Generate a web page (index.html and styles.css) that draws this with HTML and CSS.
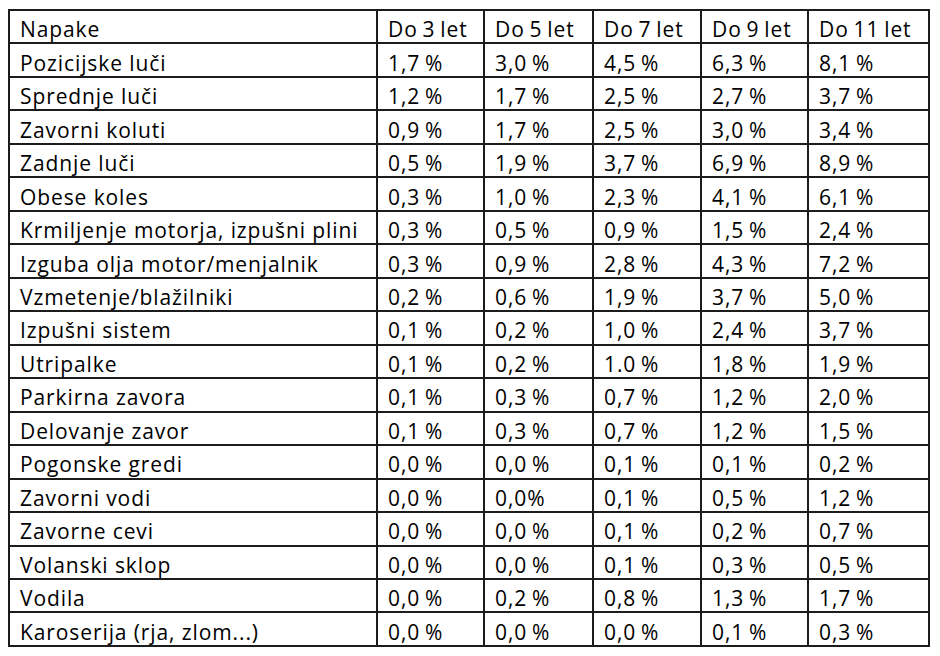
FILE: index.html
```html
<!DOCTYPE html>
<html lang="sl">
<head>
<meta charset="utf-8">
<link rel="stylesheet" href="styles.css">
</head>
<body>
<table class="grid">
<colgroup>
<col class="c-name"><col class="c2"><col class="c3"><col class="c4"><col class="c5"><col class="c6">
</colgroup>
<tbody>
<tr><td>Napake</td><td>Do 3 let</td><td>Do 5 let</td><td>Do 7 let</td><td>Do 9 let</td><td>Do 11 let</td></tr>
<tr><td>Pozicijske luči</td><td>1,7 %</td><td>3,0 %</td><td>4,5 %</td><td>6,3 %</td><td>8,1 %</td></tr>
<tr><td>Sprednje luči</td><td>1,2 %</td><td>1,7 %</td><td>2,5 %</td><td>2,7 %</td><td>3,7 %</td></tr>
<tr><td>Zavorni koluti</td><td>0,9 %</td><td>1,7 %</td><td>2,5 %</td><td>3,0 %</td><td>3,4 %</td></tr>
<tr><td>Zadnje luči</td><td>0,5 %</td><td>1,9 %</td><td>3,7 %</td><td>6,9 %</td><td>8,9 %</td></tr>
<tr><td>Obese koles</td><td>0,3 %</td><td>1,0 %</td><td>2,3 %</td><td>4,1 %</td><td>6,1 %</td></tr>
<tr><td>Krmiljenje motorja, izpušni plini</td><td>0,3 %</td><td>0,5 %</td><td>0,9 %</td><td>1,5 %</td><td>2,4 %</td></tr>
<tr><td>Izguba olja motor/menjalnik</td><td>0,3 %</td><td>0,9 %</td><td>2,8 %</td><td>4,3 %</td><td>7,2 %</td></tr>
<tr><td>Vzmetenje/blažilniki</td><td>0,2 %</td><td>0,6 %</td><td>1,9 %</td><td>3,7 %</td><td>5,0 %</td></tr>
<tr><td>Izpušni sistem</td><td>0,1 %</td><td>0,2 %</td><td>1,0 %</td><td>2,4 %</td><td>3,7 %</td></tr>
<tr><td>Utripalke</td><td>0,1 %</td><td>0,2 %</td><td>1.0 %</td><td>1,8 %</td><td>1,9 %</td></tr>
<tr><td>Parkirna zavora</td><td>0,1 %</td><td>0,3 %</td><td>0,7 %</td><td>1,2 %</td><td>2,0 %</td></tr>
<tr><td>Delovanje zavor</td><td>0,1 %</td><td>0,3 %</td><td>0,7 %</td><td>1,2 %</td><td>1,5 %</td></tr>
<tr><td>Pogonske gredi</td><td>0,0 %</td><td>0,0 %</td><td>0,1 %</td><td>0,1 %</td><td>0,2 %</td></tr>
<tr><td>Zavorni vodi</td><td>0,0 %</td><td>0,0%</td><td>0,1 %</td><td>0,5 %</td><td>1,2 %</td></tr>
<tr><td>Zavorne cevi</td><td>0,0 %</td><td>0,0 %</td><td>0,1 %</td><td>0,2 %</td><td>0,7 %</td></tr>
<tr><td>Volanski sklop</td><td>0,0 %</td><td>0,0 %</td><td>0,1 %</td><td>0,3 %</td><td>0,5 %</td></tr>
<tr><td>Vodila</td><td>0,0 %</td><td>0,2 %</td><td>0,8 %</td><td>1,3 %</td><td>1,7 %</td></tr>
<tr><td>Karoserija (rja, zlom...)</td><td>0,0 %</td><td>0,0 %</td><td>0,0 %</td><td>0,1 %</td><td>0,3 %</td></tr>
</tbody>
</table>
</body>
</html>
```

FILE: styles.css
```css
html, body {
  background: #ffffff;
}
body {
  margin: 0;
  padding: 9px 8px 0 8px;
  font-family: "Open Sans", "Noto Sans", sans-serif;
  color: #000000;
}
.grid {
  border-collapse: separate;
  border-spacing: 0;
  table-layout: fixed;
  width: 922px;
  border-left: 2px solid #1c1c1c;
  border-top: 2px solid #1c1c1c;
}
.c-name { width: 368px; }
.c2 { width: 107px; }
.c3 { width: 109px; }
.c4 { width: 108px; }
.c5 { width: 107px; }
.c6 { width: 121px; }
.grid td {
  box-sizing: border-box;
  height: 33.47px;
  padding: 5px 0 0 10px;
  border-right: 2px solid #1c1c1c;
  border-bottom: 2px solid #1c1c1c;
  font-size: 21px;
  letter-spacing: 0.9px;
  line-height: 26px;
  white-space: nowrap;
  vertical-align: middle;
  overflow: hidden;
}
.grid td + td {
  word-spacing: -1.5px;
}
```
